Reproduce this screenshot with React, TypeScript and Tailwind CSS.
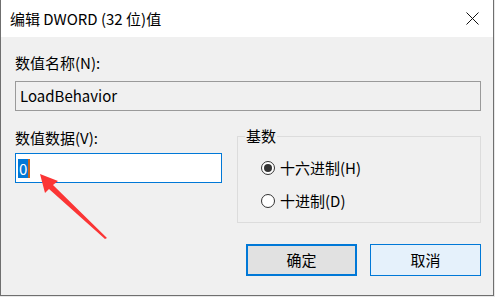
import React from "react";

const FONT = "font-['Segoe_UI','Noto_Sans_CJK_SC',sans-serif]";

function CloseIcon() {
  return (
    <svg width="13" height="13" viewBox="0 0 13 13" className="block">
      <path d="M0.5 0.5 L12.5 12.5 M12.5 0.5 L0.5 12.5" stroke="#111" strokeWidth={1} fill="none" />
    </svg>
  );
}

function Radio({ checked, label }: { checked?: boolean; label: string }) {
  return (
    <div className="flex items-center h-[20px]">
      <span className="w-[14px] h-[14px] rounded-full border border-[#333] bg-white flex items-center justify-center">
        {checked && <span className="w-[8px] h-[8px] rounded-full bg-[#333]" />}
      </span>
      <span className="ml-[5px] leading-[20px]">{label}</span>
    </div>
  );
}

/** Red annotation arrow drawn over the dialog. */
function RedArrow() {
  return (
    <svg
      width="495"
      height="297"
      viewBox="0 0 495 297"
      className="absolute left-0 top-0 pointer-events-none"
    >
      <polygon
        points="40,174 58,181 53,185 107,238 105,239 49,189 45,193"
        fill="#fb3535"
      />
    </svg>
  );
}

export default function App() {
  return (
    <div className={`relative w-[495px] h-[297px] bg-[#e8e8e8] text-[15px] text-black ${FONT}`}>
      <div className="w-[494px] h-[296px] border-l border-r border-b border-[#6f6f6f] flex flex-col bg-[#f0f0f0]">
        {/* title bar */}
        <div className="h-[37px] bg-white flex items-center justify-between pl-[9px] pr-[14px]">
          <span className="leading-[20px]">编辑 DWORD (32 位)值</span>
          <CloseIcon />
        </div>

        {/* body */}
        <div className="flex flex-col pl-[14px] pr-[12px] pt-[16px]">
          <div className="leading-[20px]">数值名称(N):</div>
          <div className="mt-[8px] h-[30px] border border-[#9a9a9a] bg-[#f0f0f0] flex items-center px-[4px]">
            LoadBehavior
          </div>

          <div className="mt-[17px] flex gap-[15px]">
            <div className="w-[207px] flex flex-col">
              <div className="leading-[20px]">数值数据(V):</div>
              <div className="mt-[5px] h-[30px] border border-[#0078d7] bg-white flex items-center px-[2px]">
                <span className="bg-[#0078d7] text-white leading-[19px] px-[1px]">0</span>
                <span className="w-[2px] h-[19px] bg-[#c8641e]" />
              </div>
            </div>

            <div className="relative mt-[8px] flex-1 h-[87px] border border-[#dcdcdc] flex flex-col pl-[23px] pt-[21px] gap-[13px]">
              <span className="absolute left-[7px] top-[-11px] px-[1px] bg-[#f0f0f0] leading-[20px]">基数</span>
              <Radio checked label="十六进制(H)" />
              <Radio label="十进制(D)" />
            </div>
          </div>

          <div className="mt-[21px] flex justify-end gap-[13px]">
            <button className="w-[111px] h-[32px] border-2 border-[#0078d7] bg-[#e1e1e1] leading-[20px]">确定</button>
            <button className="w-[111px] h-[32px] border border-[#0078d7] bg-[#e5f1fb] leading-[20px]">取消</button>
          </div>
        </div>
      </div>
      <RedArrow />
    </div>
  );
}
